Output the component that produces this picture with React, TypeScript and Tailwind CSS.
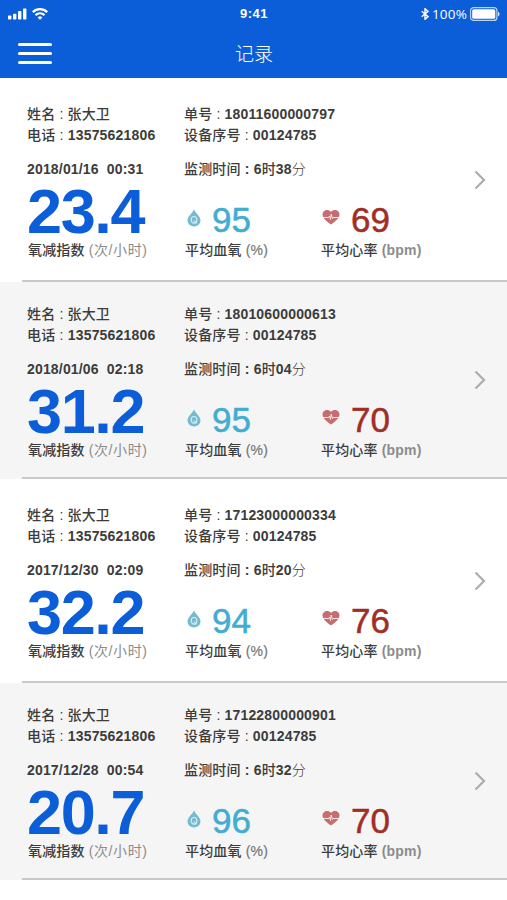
import clsx from 'clsx';

interface RecordItem {
	orderNo: string;
	date: string;
	time: string;
	minutes: string;
	odi: string;
	oxygen: string;
	heartRate: string;
}

const records: RecordItem[] = [
	{ orderNo: '18011600000797', date: '2018/01/16', time: '00:31', minutes: '38', odi: '23.4', oxygen: '95', heartRate: '69' },
	{ orderNo: '18010600000613', date: '2018/01/06', time: '02:18', minutes: '04', odi: '31.2', oxygen: '95', heartRate: '70' },
	{ orderNo: '17123000000334', date: '2017/12/30', time: '02:09', minutes: '20', odi: '32.2', oxygen: '94', heartRate: '76' },
	{ orderNo: '17122800000901', date: '2017/12/28', time: '00:54', minutes: '32', odi: '20.7', oxygen: '96', heartRate: '70' },
];

function StatusBar() {
	return (
		<div className="grid h-7 grid-cols-3 items-center pl-2 pr-[7px] text-[13px]">
			<div className="flex items-center gap-[5px]">
				<svg width="19" height="12" viewBox="0 0 19 12" fill="currentColor">
					<rect x="0" y="7.5" width="3.4" height="4" rx=".7" />
					<rect x="5" y="5.7" width="3.4" height="5.8" rx=".7" />
					<rect x="10" y="3" width="3.4" height="8.5" rx=".7" />
					<rect x="15" y="0.5" width="3.4" height="11" rx=".7" />
				</svg>
				<svg width="16" height="12" viewBox="0 0 16 12" fill="none" stroke="currentColor" strokeWidth="2.2">
					<path d="M.8 4.2a10.2 10.2 0 0 1 14.4 0" />
					<path d="M3.5 7.1a6.4 6.4 0 0 1 9 0" />
					<path d="M8 11.8 5.6 9.4a3.4 3.4 0 0 1 4.8 0z" fill="currentColor" stroke="none" />
				</svg>
			</div>
			<p className="text-center font-bold tracking-[0.5px]">9:41</p>
			<div className="flex items-center justify-end">
				<svg className="mr-[3px]" width="8" height="12" viewBox="0 0 8 12" fill="none" stroke="currentColor" strokeWidth="1.4">
					<path d="M.7 3.3 7 8.6 4 11.3V.7L7 3.4.7 8.7" />
				</svg>
				<p className="mr-[3px] font-['Open_Sans',sans-serif] text-[13.5px] tracking-[0.2px]">100%</p>
				<svg width="30" height="14" viewBox="0 0 30 14" fill="none">
					<rect x=".6" y=".6" width="26.3" height="12.8" rx="3" stroke="#b9d3f8" strokeWidth="1.2" />
					<rect x="2.2" y="2.2" width="23.1" height="9.6" rx="1.6" fill="#fff" />
					<path d="M28 4.7c2 .7 2 3.9 0 4.6z" fill="#d5e4fb" />
				</svg>
			</div>
		</div>
	);
}

function Header() {
	return (
		<header className="h-[78px] bg-[#0b5ed7] text-white">
			<StatusBar />
			<div className="grid h-[50px] grid-cols-3 items-center pl-[18px]">
				<div className="flex w-[34px] flex-col gap-[6px]">
					<span className="h-[3px] rounded-full bg-white" />
					<span className="h-[3px] rounded-full bg-white" />
					<span className="h-[3px] rounded-full bg-white" />
				</div>
				<h1 className="-ml-[18px] pl-px pt-[5px] text-center text-[19px] font-light">记录</h1>
			</div>
		</header>
	);
}

function DropIcon() {
	return (
		<svg width="14" height="18" viewBox="0 0 14 18" className="mb-[3px] mr-[11px]">
			<path d="M7 .5C5.5 4.2.5 7.5.5 11.4a6.5 6 0 0 0 13 0C13.5 7.5 8.5 4.2 7 .5z" fill="#74bbd1" />
			<ellipse cx="7" cy="10.8" rx="2.8" ry="3.3" fill="none" stroke="#d5edf4" strokeWidth="1.2" />
			<path d="M7 11.5 9.3 14.3" stroke="#d5edf4" strokeWidth="1.1" />
		</svg>
	);
}

function HeartIcon() {
	return (
		<svg width="18" height="16" viewBox="0 0 18 16" className="mb-[5px] mr-[11px]">
			<path d="M9 15.5C5.5 13 .5 9.500 .5 5.2.5 1 6.2-.6 9 3c2.8-3.6 8.5-2 8.5 2.2C17.5 9.5 12.5 13 9 15.5z" fill="#c66d70" />
			<path d="M1 8.5h5.5l1-1.5 1 3.5L9.2 5l1.3 4.5.8-1H17" fill="none" stroke="#f8e6e6" strokeWidth="1" />
		</svg>
	);
}

function RecordRow({ record, striped }: { record: RecordItem; striped: boolean }) {
	return (
		<li className={clsx('pl-[22px]', striped ? 'h-[197px] bg-[#f5f5f5]' : 'h-[204px] bg-white')}>
			<div
				className={clsx(
					'flex h-full border-b-2 border-[#c9c9c9] pl-[5px] text-sm tracking-[0.17px] text-[#3c3c3c]',
					striped ? 'pt-[22px]' : 'pt-[26px]',
				)}
			>
				<div className="w-[157px] shrink-0 whitespace-nowrap">
					<p className="h-[21px] font-medium leading-[21px]">姓名 : 张大卫</p>
					<p className="h-[21px] font-medium leading-[21px] tracking-[0.2px]">
						电话 : <b>13575621806</b>
					</p>
					<p className="mt-[13px] h-[21px] font-bold leading-[21px]">
						{record.date}
						<span className="ml-2">{record.time}</span>
					</p>
					<p className="h-[60px] text-[63px] font-bold leading-[63px] tracking-[-1.4px] text-[#0b5ed7]">{record.odi}</p>
					<p className="h-5 pl-px font-medium leading-5">
						氧减指数 <span className="font-normal tracking-[0.6px] text-[#8c8c8c]">(次/小时)</span>
					</p>
				</div>
				<div className="w-[291px] shrink-0 whitespace-nowrap">
					<p className="h-[21px] font-medium leading-[21px]">
						单号 : <b>{record.orderNo}</b>
					</p>
					<p className="h-[21px] font-medium leading-[21px]">
						设备序号 : <b>00124785</b>
					</p>
					<p className="mt-[13px] h-[21px] font-medium leading-[21px]">
						监测时间 <b>:</b> <b>6</b>时<b>{record.minutes}</b>
						<span className="font-light">分</span>
					</p>
					<div className="flex">
						<div className="w-[137px]">
							<div className="flex h-[60px] items-center pl-[3px] pt-[19px]">
								<DropIcon />
								<span className="text-[35px] leading-none tracking-normal text-[#42acd1] [-webkit-text-stroke:0.5px_#42acd1]">
									{record.oxygen}
								</span>
							</div>
							<p className="h-5 pl-px font-medium leading-5">
								平均血氧 <span className="font-normal text-[#777] [-webkit-text-stroke:0.2px_#777]">(%)</span>
							</p>
						</div>
						<div>
							<div className="flex h-[60px] items-center pl-px pt-[19px]">
								<HeartIcon />
								<span className="text-[35px] leading-none tracking-normal text-[#a02e25] [-webkit-text-stroke:0.5px_#a02e25]">
									{record.heartRate}
								</span>
							</div>
							<p className="h-5 font-medium leading-5">
								平均心率 <b className="text-[#8c8c8c]">(bpm)</b>
							</p>
						</div>
					</div>
				</div>
				<svg className="-ml-px mt-[66px]" width="12" height="20" viewBox="0 0 12 20" fill="none" stroke="#adadad" strokeWidth="2.2">
					<path d="m1.5 1.5 8.5 8.5-8.5 8.5" />
				</svg>
			</div>
		</li>
	);
}

export default function App() {
	return (
		<div className="min-h-[900px] w-full bg-white font-['Liberation_Sans','Noto_Sans_CJK_SC',sans-serif]">
			<Header />
			<ul>
				{records.map((record, index) => (
					<RecordRow key={record.orderNo} record={record} striped={index % 2 === 1} />
				))}
			</ul>
		</div>
	);
}
